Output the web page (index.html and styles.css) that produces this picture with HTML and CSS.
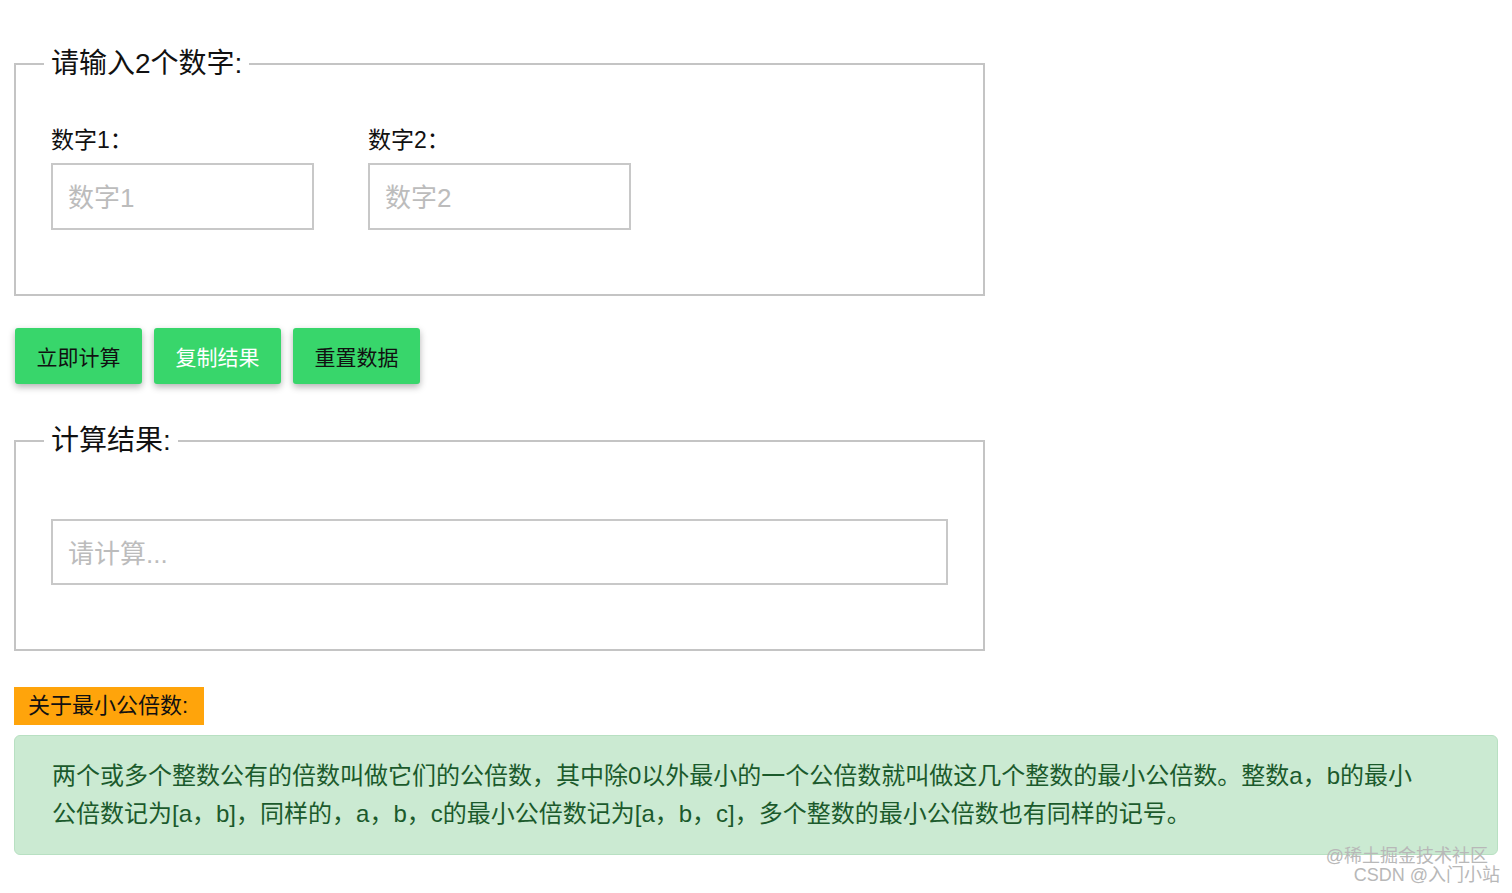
FILE: index.html
```html
<!DOCTYPE html>
<html lang="zh-CN">
<head>
<meta charset="utf-8">
<title>最小公倍数计算</title>
<link rel="stylesheet" href="styles.css">
</head>
<body>
<div class="page">
  <fieldset class="box box-input">
    <legend class="box-legend">请输入2个数字:</legend>
    <div class="fields">
      <div class="field">
        <label class="field-label" for="n1">数字1：</label>
        <input class="text-input small" id="n1" type="text" placeholder="数字1">
      </div>
      <div class="field">
        <label class="field-label" for="n2">数字2：</label>
        <input class="text-input small" id="n2" type="text" placeholder="数字2">
      </div>
    </div>
  </fieldset>

  <div class="actions">
    <button class="btn">立即计算</button>
    <button class="btn btn-light">复制结果</button>
    <button class="btn">重置数据</button>
  </div>

  <fieldset class="box box-result">
    <legend class="box-legend">计算结果:</legend>
    <input class="text-input wide" type="text" placeholder="请计算...">
  </fieldset>

  <div class="badge">关于最小公倍数:</div>
  <div class="note">两个或多个整数公有的倍数叫做它们的公倍数，其中除0以外最小的一个公倍数就叫做这几个整数的最小公倍数。整数a，b的最小公倍数记为[a，b]，同样的，a，b，c的最小公倍数记为[a，b，c]，多个整数的最小公倍数也有同样的记号。</div>
</div>
<div class="watermark">
  <div class="wm-line wm-first">@稀土掘金技术社区</div>
  <div class="wm-line">CSDN @入门小站</div>
</div>
</body>
</html>
```

FILE: styles.css
```css
html, body {
  margin: 0;
  padding: 0;
  background: #ffffff;
}

body {
  font-family: "Liberation Sans", "Noto Sans CJK SC", sans-serif;
  color: #111;
}

.page {
  padding: 0 14px;
  display: flex;
  flex-direction: column;
  align-items: flex-start;
}

.box {
  box-sizing: border-box;
  width: 971px;
  margin: 0;
  border: 2px solid #c4c4c4;
  padding: 0 35px 64px 35px;
}

.box-input {
  margin-top: 46px;
  padding-top: 43px;
}

.box-result {
  margin-top: 39px;
  padding-top: 60px;
}

.box-legend {
  font-size: 28px;
  line-height: 36px;
  padding: 0 7px;
  margin-left: -7px;
  color: #111;
}

.fields {
  display: flex;
  gap: 54px;
}

.field {
  display: flex;
  flex-direction: column;
  gap: 8px;
}

.field-label {
  font-size: 23px;
  line-height: 30px;
  color: #111;
}

.text-input {
  box-sizing: border-box;
  border: 2px solid #c8c8c8;
  border-radius: 0;
  padding: 4px 15px 0 15px;
  font-family: "Liberation Sans", "Noto Sans CJK SC", sans-serif;
  font-size: 26px;
  color: #333;
  background: #fff;
  outline: none;
  margin: 0;
}

.text-input::placeholder {
  color: #bcbcbc;
}

.text-input.small {
  width: 263px;
  height: 67px;
}

.text-input.wide {
  display: block;
  width: 100%;
  height: 66px;
}

.actions {
  margin-top: 32px;
  margin-left: 1px;
  display: flex;
  gap: 12px;
}

.btn {
  box-sizing: border-box;
  width: 127px;
  height: 56px;
  padding: 0;
  border: none;
  border-radius: 3px;
  background: #38d66b;
  color: #111;
  font-family: "Liberation Sans", "Noto Sans CJK SC", sans-serif;
  font-size: 21px;
  box-shadow: 0 3px 7px rgba(0, 0, 0, 0.3);
  cursor: pointer;
}

.btn-light {
  color: #ffffff;
}

.badge {
  margin-top: 36px;
  background: #ffa40b;
  color: #111;
  font-size: 22px;
  line-height: 38px;
  height: 38px;
  padding: 0 14px;
  box-sizing: border-box;
  width: 190px;
  white-space: nowrap;
}

.note {
  align-self: stretch;
  margin-top: 10px;
  background: #cbead2;
  border: 1px solid #b8e0c2;
  border-radius: 6px;
  padding: 21px 70px 21px 37px;
  font-size: 24px;
  line-height: 38px;
  color: #1b5a2c;
}

.watermark {
  position: absolute;
  top: 847px;
  right: 12px;
  text-align: right;
  font-size: 18px;
  line-height: 19px;
  color: #b8b8b8;
}

.wm-first {
  margin-right: 12px;
}
```
